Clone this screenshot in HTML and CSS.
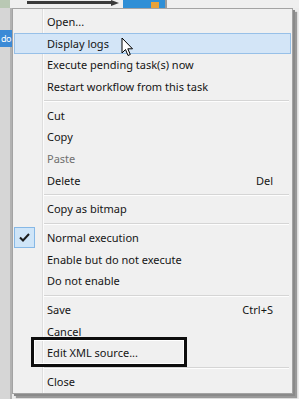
FILE: index.html
```html
<!DOCTYPE html>
<html lang="en">
<head>
<meta charset="utf-8">
<title>Context menu</title>
<link rel="stylesheet" href="styles.css">
</head>
<body>
<div class="stage">
  <div class="topbar">
    <div class="tree-icon"></div>
    <div class="arrow">
      <svg width="92" height="6" viewBox="0 0 92 6"><path d="M0 2.5 H86" stroke="#3a3a3a" stroke-width="3"/><path d="M84 0 L92 3 L84 6 Z" fill="#3a3a3a"/></svg>
    </div>
    <div class="node-icon"><span class="node-orange"></span></div>
    <div class="vline"></div>
  </div>
  <div class="tree">
    <div class="tree-sel">do</div>
  </div>
  <div class="canvas"></div>

  <div class="menu">
    <div class="item"><span class="label">Open...</span></div>
    <div class="item hover"><span class="label">Display logs</span></div>
    <div class="item"><span class="label">Execute pending task(s) now</span></div>
    <div class="item"><span class="label">Restart workflow from this task</span></div>
    <div class="sep"></div>
    <div class="item"><span class="label">Cut</span></div>
    <div class="item"><span class="label">Copy</span></div>
    <div class="item disabled"><span class="label">Paste</span></div>
    <div class="item"><span class="label">Delete</span><span class="shortcut">Del</span></div>
    <div class="sep"></div>
    <div class="item"><span class="label">Copy as bitmap</span></div>
    <div class="sep"></div>
    <div class="item"><span class="check"><svg width="11" height="9" viewBox="0 0 11 9"><path d="M1 4.5 L4 7.5 L10 1" fill="none" stroke="#1c1c1c" stroke-width="2"/></svg></span><span class="label">Normal execution</span></div>
    <div class="item"><span class="label">Enable but do not execute</span></div>
    <div class="item"><span class="label">Do not enable</span></div>
    <div class="sep"></div>
    <div class="item"><span class="label">Save</span><span class="shortcut">Ctrl+S</span></div>
    <div class="item"><span class="label">Cancel</span></div>
    <div class="item"><span class="label">Edit XML source...</span></div>
    <div class="sep"></div>
    <div class="item"><span class="label">Close</span></div>
  </div>

  <div class="annot"></div>

  <svg class="cursor" width="13" height="20" viewBox="0 0 13 20"><path d="M1 1 L1 16 L4.5 12.5 L7 18.5 L9.3 17.5 L6.8 11.8 L11.5 11.8 Z" fill="#fff" stroke="#000" stroke-width="1" stroke-linejoin="round"/></svg>
</div>
</body>
</html>
```
FILE: styles.css
```css
* { box-sizing: border-box; }
html, body { margin: 0; padding: 0; }
body { background: #ebebeb; }

.stage {
  position: relative;
  width: 299px;
  height: 399px;
  overflow: hidden;
  background: #ebebeb;
  display: grid;
  grid-template-columns: 12px 1fr;
  grid-template-rows: 8px 1fr;
  font-family: "Noto Sans", "DejaVu Sans", sans-serif;
}

.topbar {
  grid-column: 1 / -1;
  display: flex;
  align-items: flex-start;
  background: #efefef;
}
.tree-icon {
  width: 10px;
  height: 8px;
  background: #b9c8b4;
  margin-right: 17px;
}
.arrow { width: 92px; height: 6px; margin-right: 4px; }
.arrow svg { display: block; }
.node-icon {
  width: 42px;
  height: 8px;
  background: #2f8fd6;
  position: relative;
}
.node-orange {
  position: absolute;
  left: 28px;
  top: 2px;
  width: 8px;
  height: 6px;
  background: #e8a23a;
}
.vline { width: 2px; height: 8px; background: #9a9a9a; }

.tree {
  background: #d6d6d6;
  box-shadow: inset -2px 0 0 #b2b2b2;
  padding-top: 22px;
}
.tree-sel {
  height: 17px;
  background: #3b8ad6;
  color: #fff;
  font-size: 9px;
  line-height: 17px;
  letter-spacing: -0.5px;
  padding-left: 1px;
  white-space: nowrap;
}
.canvas { background: #ececec; }

.menu {
  position: absolute;
  left: 12px;
  top: 8px;
  width: 281px;
  height: 386px;
  border: 1px solid #a3a3a3;
  background-color: #f0f0f0;
  background-image: linear-gradient(to right, transparent 29px, #dedede 29px, #dedede 30px, #fbfbfb 30px, #fbfbfb 31px, transparent 31px);
  padding: 2px 0;
  box-shadow: 2px 2px 0 #8a8a8a, 4px 4px 1px rgba(0,0,0,0.35);
  font-size: 11px;
  color: #151515;
}

.item {
  position: relative;
  display: flex;
  align-items: center;
  height: 21.6px;
  margin: 0 1px;
  padding-left: 33px;
  padding-right: 18px;
  white-space: nowrap;
}
.item .label { flex: 1; }
.item.hover {
  background: #d3e5f7;
  border: 1px solid #97c0e8;
  padding-left: 32px;
  padding-right: 17px;
}
.item.disabled { color: #6f6f6f; }

.check {
  position: absolute;
  left: 0;
  top: 0;
  width: 21px;
  height: 21px;
  background: #cfe5f8;
  border: 1px solid #86b8e6;
  display: flex;
  align-items: center;
  justify-content: center;
}
.check svg { display: block; }

.sep {
  height: 7.2px;
  display: flex;
  align-items: center;
  padding-left: 31px;
  padding-right: 3px;
}
.sep::before {
  content: "";
  flex: 1;
  height: 1px;
  background: #d5d5d5;
  box-shadow: 0 1px 0 #fdfdfd;
}

.annot {
  position: absolute;
  left: 31px;
  top: 337px;
  width: 156px;
  height: 30px;
  border: 3.5px solid #0e0e0e;
  box-shadow: inset 0 0 0 1px #fff;
}

.cursor {
  position: absolute;
  left: 121px;
  top: 37px;
}
```
